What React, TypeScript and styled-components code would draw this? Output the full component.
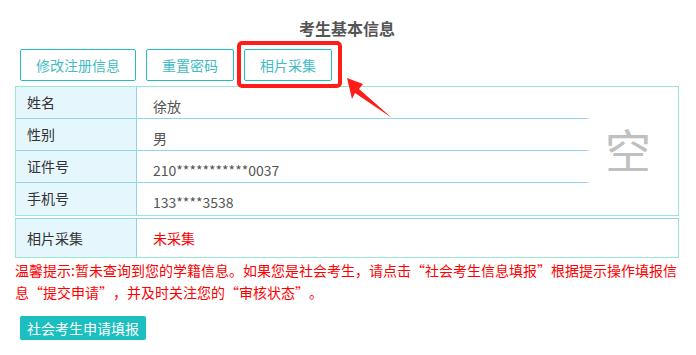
import React from 'react';
import styled, { createGlobalStyle } from 'styled-components';

const GlobalStyle = createGlobalStyle`
  body {
    margin: 0;
    background: #ffffff;
    font-family: "Noto Sans CJK SC", "Noto Sans", sans-serif;
  }
`;

const Page = styled.div`
  width: 664px;
  margin-left: 15px;
`;

const Title = styled.div`
  padding-top: 18px;
  text-align: center;
  font-size: 16px;
  line-height: 20px;
  font-weight: bold;
  color: #555555;
`;

const Toolbar = styled.div`
  display: flex;
  gap: 10px;
  margin-top: 11px;
  padding-left: 5px;
`;

const OutlineButton = styled.button`
  height: 32px;
  padding: 0 15px;
  background: #ffffff;
  border: 1px solid #22bfc2;
  border-radius: 2px;
  color: #3fbcc4;
  font-family: inherit;
  font-size: 14px;
  cursor: pointer;
`;

// red annotation box + arrow drawn over the photo button
const Highlight = styled.div`
  position: relative;

  &::after {
    content: "";
    position: absolute;
    left: -7px;
    top: -8px;
    right: -10px;
    bottom: -7px;
    border: 4px solid #ff1d1a;
    border-radius: 5px;
    pointer-events: none;
  }
`;

const Arrow = styled.svg`
  position: absolute;
  left: 100px;
  top: 25px;
  overflow: visible;
`;

const InfoGrid = styled.div`
  display: grid;
  grid-template-columns: 121px 1fr 90px;
  grid-template-rows: repeat(4, 32px);
  margin-top: 5px;
  border: 1px solid #97e8d5;
`;

const PhotoGrid = styled.div`
  display: grid;
  grid-template-columns: 121px 1fr;
  margin-top: 2px;
  border: 1px solid #97e8d5;
  border-top-color: #8fd6f0;
`;

const LabelCell = styled.div<{ $last?: boolean; $tall?: boolean }>`
  background: #e6f6fd;
  border-right: 1px solid #8fd2f4;
  border-bottom: ${p => (p.$last ? 'none' : '1px solid #8fd2f4')};
  padding-left: 11px;
  font-size: 14px;
  line-height: ${p => (p.$tall ? '38px' : '30px')};
  color: #333333;
`;

const ValueCell = styled.div<{ $last?: boolean; $alert?: boolean; $tall?: boolean }>`
  border-bottom: ${p => (p.$last ? 'none' : '1px solid #8fd2f4')};
  padding-left: 16px;
  padding-top: ${p => (p.$tall ? '0' : '9px')};
  font-size: 14px;
  line-height: ${p => (p.$tall ? '38px' : '20px')};
  color: ${p => (p.$alert ? '#ff0000' : '#555555')};
`;

const PhotoCell = styled.div`
  grid-column: 3;
  grid-row: 1 / span 4;
  display: flex;
  align-items: center;
  justify-content: center;
  padding: 0 10px 6px 0;
  font-size: 46px;
  color: #c0c0c0;
`;

const Notice = styled.p`
  margin: 1px 0 0;
  font-size: 14px;
  line-height: 22px;
  color: #ff0000;
  text-spacing-trim: space-all;
  font-feature-settings: "chws" 0, "halt" 0;
`;

const FillButton = styled.button`
  height: 24px;
  margin: 13px 0 0 5px;
  padding: 0 7px;
  background: #1bbfbf;
  border: none;
  border-radius: 2px;
  color: #ffffff;
  font-family: inherit;
  font-size: 14px;
  line-height: 24px;
  cursor: pointer;
`;

const rows = [
  { label: '姓名', value: '徐放' },
  { label: '性别', value: '男' },
  { label: '证件号', value: '210***********0037' },
  { label: '手机号', value: '133****3538' },
];

export default function App() {
  return (
    <>
      <GlobalStyle />
      <Page>
        <Title>考生基本信息</Title>
        <Toolbar>
          <OutlineButton>修改注册信息</OutlineButton>
          <OutlineButton>重置密码</OutlineButton>
          <Highlight>
            <OutlineButton>相片采集</OutlineButton>
            <Arrow width="52" height="48" viewBox="0 0 52 48">
              <polygon points="3,4 19,10 15,15 48,44 11,19 8,25" fill="#ff1d1a" />
            </Arrow>
          </Highlight>
        </Toolbar>
        <InfoGrid>
          {rows.map((r, i) => (
            <React.Fragment key={r.label}>
              <LabelCell $last={i === rows.length - 1}>{r.label}</LabelCell>
              <ValueCell $last={i === rows.length - 1}>{r.value}</ValueCell>
            </React.Fragment>
          ))}
          <PhotoCell>空</PhotoCell>
        </InfoGrid>
        <PhotoGrid>
          <LabelCell $last $tall>相片采集</LabelCell>
          <ValueCell $last $tall $alert>未采集</ValueCell>
        </PhotoGrid>
        <Notice>
          温馨提示:暂未查询到您的学籍信息。如果您是社会考生，请点击“社会考生信息填报”根据提示操作填报信息“提交申请”，并及时关注您的“审核状态”。
        </Notice>
        <FillButton>社会考生申请填报</FillButton>
      </Page>
    </>
  );
}
